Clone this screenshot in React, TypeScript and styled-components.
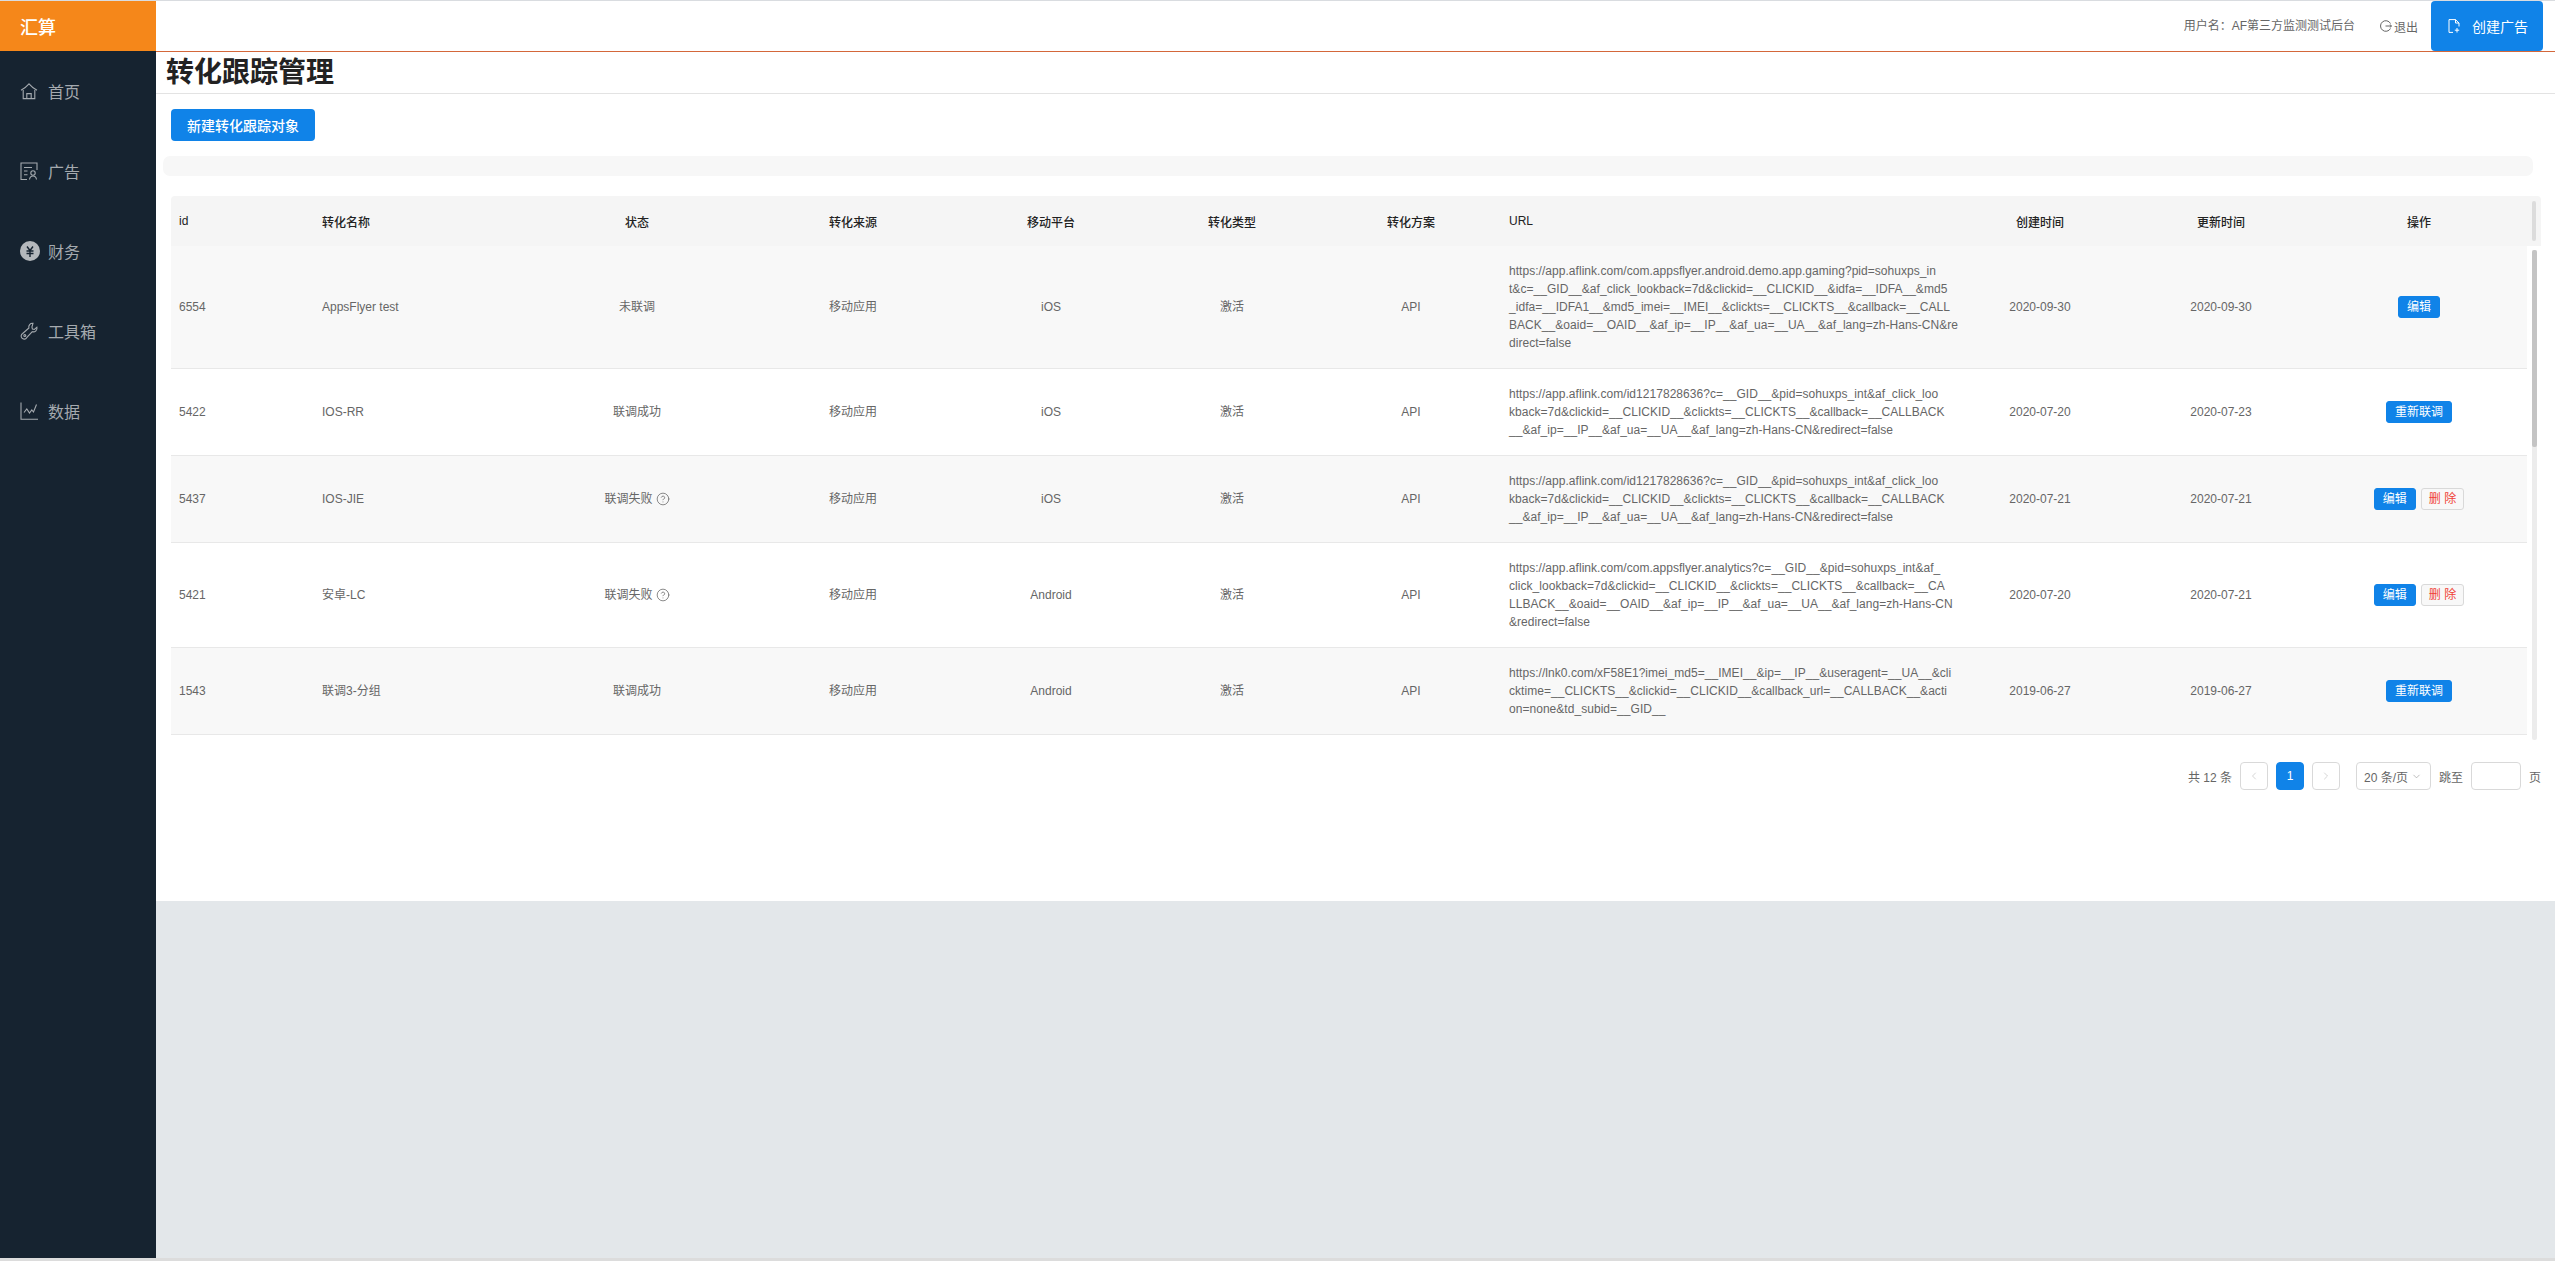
import React from 'react';
import styled, { createGlobalStyle } from 'styled-components';
import { CircleHelp, ChevronLeft, ChevronRight, ChevronDown } from 'lucide-react';

const GlobalStyle = createGlobalStyle`
  html, body {
    margin: 0;
    padding: 0;
    background: #e3e7ea;
    font-family: "Liberation Sans", "Noto Sans CJK SC", sans-serif;
    font-size: 12px;
    color: #666;
  }
  * { box-sizing: border-box; }
`;

const Shell = styled.div`
  display: flex;
  height: 1261px;
  border-top: 1px solid #d9dce0;
  border-bottom: 3px solid #dcdcdc;
  overflow: hidden;
`;

const Sidebar = styled.aside`
  width: 156px;
  flex: none;
  background: #162330;
`;

const Logo = styled.div`
  height: 50px;
  padding-left: 20px;
  display: flex;
  align-items: center;
  background: #f5871a;
  color: #fff;
  font-size: 18px;
  font-weight: 500;
`;

const NavItem = styled.div`
  height: 80px;
  padding-left: 20px;
  display: flex;
  align-items: center;
  gap: 10px;
  color: #a5aaaf;
  font-size: 16px;
`;

const NavIcon = styled.svg`
  width: 18px;
  height: 18px;
  flex: none;
  fill: none;
  stroke: #a5aaaf;
  stroke-width: 1.1;
  overflow: visible;
`;

const Main = styled.main`
  flex: 1;
  min-width: 0;
  display: flex;
  flex-direction: column;
`;

const TopBar = styled.header`
  height: 51px;
  flex: none;
  padding-right: 12px;
  display: flex;
  align-items: flex-start;
  justify-content: flex-end;
  background: #fff;
  border-bottom: 1px solid #d4673a;
`;

const UserName = styled.span`
  height: 50px;
  line-height: 50px;
  color: #666;
`;

const Logout = styled.span`
  height: 50px;
  margin: 0 13px 0 25px;
  display: flex;
  align-items: center;
  gap: 2px;
  color: #666;
`;

const SmallIcon = styled.svg<{ $light?: boolean }>`
  width: 12px;
  height: ${p => (p.$light ? 14 : 12)}px;
  fill: none;
  stroke: ${p => (p.$light ? '#fff' : '#666')};
  stroke-width: 1;
`;

const CreateAd = styled.button`
  width: 112px;
  height: 50px;
  padding: 0 0 0 17px;
  display: flex;
  align-items: center;
  gap: 12px;
  border: 0;
  border-radius: 4px;
  background: #1083e8;
  color: #fff;
  font: inherit;
  font-size: 14px;
`;

const Panel = styled.section`
  height: 849px;
  flex: none;
  background: #fff;
`;

const TitleBar = styled.div`
  height: 42px;
  padding-left: 10px;
  border-bottom: 1px solid #e3e3e3;
`;

const PageTitle = styled.h1`
  margin: 0;
  line-height: 41px;
  font-size: 28px;
  font-weight: 700;
  color: #222;
`;

const Toolbar = styled.div`
  padding: 15px 0 0 15px;
`;

const PrimaryButton = styled.button`
  width: 144px;
  height: 32px;
  padding: 0;
  border: 0;
  border-radius: 4px;
  background: #1083e8;
  color: #fff;
  font: inherit;
  font-size: 14px;
  font-weight: 500;
`;

const FilterBar = styled.div`
  height: 20px;
  margin: 15px 22px 0 7px;
  border-radius: 7px;
  background: #f7f7f7;
`;

const TableArea = styled.div`
  width: 2370px;
  margin: 20px 0 0 15px;
`;

const HeadRow = styled.div`
  display: flex;
  height: 50px;
  border-radius: 4px 4px 0 0;
  background: #f5f5f5;
`;

const HeadGutter = styled.div`
  width: 14px;
  padding: 5px;
`;

const HeadThumb = styled.div`
  width: 4px;
  height: 40px;
  border-radius: 2px;
  background: #dcdcdc;
`;

const Grid = styled.table`
  width: 2356px;
  flex: none;
  align-self: flex-start;
  table-layout: fixed;
  border-collapse: collapse;
`;

const Col = styled.col<{ $w: number }>`
  width: ${p => p.$w}px;
`;

const Th = styled.th<{ $left?: boolean }>`
  height: 50px;
  padding: 0 8px;
  text-align: ${p => (p.$left ? 'left' : 'center')};
  font-size: 12px;
  font-weight: 500;
  color: #222;
`;

const BodyRow = styled.div`
  display: flex;
  height: 494px;
  overflow: hidden;
`;

const Tr = styled.tr<{ $odd: boolean }>`
  background: ${p => (p.$odd ? '#f8f8f8' : '#fff')};
  border-bottom: 1px solid #e8e8e8;
`;

const Td = styled.td<{ $left?: boolean }>`
  padding: 16px 8px;
  text-align: ${p => (p.$left ? 'left' : 'center')};
  line-height: 18px;
  color: #666;
`;

const UrlLine = styled.div`
  letter-spacing: 0.04px;
  white-space: nowrap;
`;

const Track = styled.div`
  width: 5px;
  margin: 4px 0 0 5px;
  border-radius: 2px;
  background: #ececec;
`;

const Thumb = styled.div`
  height: 197px;
  border-radius: 2px;
  background: #c4c4c4;
`;

const StatusLine = styled.span`
  display: inline-flex;
  align-items: center;
  gap: 3px;
  vertical-align: middle;
`;

const Actions = styled.div`
  display: flex;
  justify-content: center;
  gap: 5px;
`;

const MiniButton = styled.button<{ $danger?: boolean }>`
  height: 22px;
  padding: 0 ${p => (p.$danger ? 7 : 8)}px;
  border: 1px solid ${p => (p.$danger ? '#d9d9d9' : '#1083e8')};
  border-radius: 3px;
  background: ${p => (p.$danger ? '#f8f8f8' : '#1083e8')};
  color: ${p => (p.$danger ? '#f04134' : '#fff')};
  font: inherit;
  font-size: 12px;
  line-height: 20px;
`;

const Pager = styled.nav`
  height: 28px;
  margin-top: 22px;
  display: flex;
  align-items: center;
  justify-content: flex-end;
  color: #666;
`;

const PageBox = styled.span<{ $active?: boolean }>`
  width: 28px;
  height: 28px;
  margin-left: 8px;
  display: flex;
  align-items: center;
  justify-content: center;
  border: 1px solid ${p => (p.$active ? '#1083e8' : '#d9d9d9')};
  border-radius: 4px;
  background: ${p => (p.$active ? '#1083e8' : '#fff')};
  color: ${p => (p.$active ? '#fff' : '#b8b8b8')};
`;

const PageSize = styled.span`
  width: 75px;
  height: 28px;
  margin: 0 8px 0 16px;
  padding-left: 7px;
  display: flex;
  align-items: center;
  gap: 3px;
  border: 1px solid #d9d9d9;
  border-radius: 4px;
`;

const JumpInput = styled.span`
  width: 50px;
  height: 28px;
  margin: 0 8px;
  border: 1px solid #d9d9d9;
  border-radius: 4px;
`;

const columns = [
  { title: 'id', width: 143, left: true },
  { title: '转化名称', width: 213, left: true },
  { title: '状态', width: 220 },
  { title: '转化来源', width: 212 },
  { title: '移动平台', width: 184 },
  { title: '转化类型', width: 178 },
  { title: '转化方案', width: 180 },
  { title: 'URL', width: 448, left: true },
  { title: '创建时间', width: 182 },
  { title: '更新时间', width: 180 },
  { title: '操作', width: 216 },
];

// the url column wraps mid-word, so the lines are kept as they break in the design
const shortLinkLines = [
  'https://app.aflink.com/id1217828636?c=__GID__&pid=sohuxps_int&af_click_loo',
  'kback=7d&clickid=__CLICKID__&clickts=__CLICKTS__&callback=__CALLBACK',
  '__&af_ip=__IP__&af_ua=__UA__&af_lang=zh-Hans-CN&redirect=false',
];

const rows = [
  {
    id: '6554',
    name: 'AppsFlyer test',
    status: '未联调',
    platform: 'iOS',
    url: [
      'https://app.aflink.com/com.appsflyer.android.demo.app.gaming?pid=sohuxps_in',
      't&c=__GID__&af_click_lookback=7d&clickid=__CLICKID__&idfa=__IDFA__&md5',
      '_idfa=__IDFA1__&md5_imei=__IMEI__&clickts=__CLICKTS__&callback=__CALL',
      'BACK__&oaid=__OAID__&af_ip=__IP__&af_ua=__UA__&af_lang=zh-Hans-CN&re',
      'direct=false',
    ],
    created: '2020-09-30',
    updated: '2020-09-30',
    actions: ['edit'],
  },
  {
    id: '5422',
    name: 'IOS-RR',
    status: '联调成功',
    platform: 'iOS',
    url: shortLinkLines,
    created: '2020-07-20',
    updated: '2020-07-23',
    actions: ['relink'],
  },
  {
    id: '5437',
    name: 'IOS-JIE',
    status: '联调失败',
    help: true,
    platform: 'iOS',
    url: shortLinkLines,
    created: '2020-07-21',
    updated: '2020-07-21',
    actions: ['edit', 'delete'],
  },
  {
    id: '5421',
    name: '安卓-LC',
    status: '联调失败',
    help: true,
    platform: 'Android',
    url: [
      'https://app.aflink.com/com.appsflyer.analytics?c=__GID__&pid=sohuxps_int&af_',
      'click_lookback=7d&clickid=__CLICKID__&clickts=__CLICKTS__&callback=__CA',
      'LLBACK__&oaid=__OAID__&af_ip=__IP__&af_ua=__UA__&af_lang=zh-Hans-CN',
      '&redirect=false',
    ],
    created: '2020-07-20',
    updated: '2020-07-21',
    actions: ['edit', 'delete'],
  },
  {
    id: '1543',
    name: '联调3-分组',
    status: '联调成功',
    platform: 'Android',
    url: [
      'https://lnk0.com/xF58E1?imei_md5=__IMEI__&ip=__IP__&useragent=__UA__&cli',
      'cktime=__CLICKTS__&clickid=__CLICKID__&callback_url=__CALLBACK__&acti',
      'on=none&td_subid=__GID__',
    ],
    created: '2019-06-27',
    updated: '2019-06-27',
    actions: ['relink'],
  },
];

const navItems = [
  {
    label: '首页',
    icon: (
      <NavIcon viewBox="0 0 18 18">
        <path d="M1 8.2C4 6.5 6.8 4.4 9 1.8c2.200 2.600 5 4.700 8 6.400" />
        <path d="M3.200 8v8.600h11.600V8" />
        <path d="M6.800 16.600v-5h4.400v5" />
      </NavIcon>
    ),
  },
  {
    label: '广告',
    icon: (
      <NavIcon viewBox="0 0 18 18">
        <path d="M17 8V1H1v16.500h6" />
        <path d="M4 5.500h8M4 9h3.500M4 12.800h3.500" />
        <circle cx="13" cy="11" r="2.200" />
        <path d="M9.500 17.500c.3-2.200 1.700-3.500 3.500-3.500s3.200 1.300 3.500 3.500" />
      </NavIcon>
    ),
  },
  {
    label: '财务',
    icon: (
      <NavIcon viewBox="0 0 18 18">
        <circle cx="10" cy="9" r="10" fill="#b4b8bc" stroke="none" />
        <path d="M7 4.500 10 8.500l3-4M6.500 9h7M6.500 11.500h7M10 8.500V15" stroke="#162330" strokeWidth="1.400" />
      </NavIcon>
    ),
  },
  {
    label: '工具箱',
    icon: (
      <NavIcon viewBox="0 0 18 18">
        <path d="M13 1.300a3.700 3.700 0 0 0-4.100 4.700L2.700 11.500a3 3 0 1 0 4 4.200l5.600-6a3.700 3.700 0 0 0 4.600-4.500l-2.500 2.300-2-.5-.5-2z" />
        <circle cx="4.800" cy="13.500" r="1" />
      </NavIcon>
    ),
  },
  {
    label: '数据',
    icon: (
      <NavIcon viewBox="0 0 18 18">
        <path d="M1 .5v16.800h17" />
        <path d="M4 10.500 6.800 7l2.700 4 2.300-3 1.700 2 3-7.500" />
      </NavIcon>
    ),
  },
];

const App: React.FC = () => {
  return (
    <>
      <GlobalStyle />
      <Shell>
        <Sidebar>
          <Logo>汇算</Logo>
          {navItems.map(item => (
            <NavItem key={item.label}>
              {item.icon}
              {item.label}
            </NavItem>
          ))}
        </Sidebar>
        <Main>
          <TopBar>
            <UserName>用户名：AF第三方监测测试后台</UserName>
            <Logout>
              <SmallIcon viewBox="0 0 12 12">
                <path d="M10.500 3.500a5.300 5.300 0 1 0 0 5" />
                <path d="M5.500 6h6M9.800 4.500 11.500 6 9.800 7.500" />
              </SmallIcon>
              退出
            </Logout>
            <CreateAd>
              <SmallIcon $light viewBox="0 0 12 14">
                <path d="M5 13.400H1V.6h6.500L11 4v3.500" />
                <path d="M7.500.6V4H11M9 9v4.500M6.800 11.200h4.400" />
              </SmallIcon>
              创建广告
            </CreateAd>
          </TopBar>
          <Panel>
            <TitleBar>
              <PageTitle>转化跟踪管理</PageTitle>
            </TitleBar>
            <Toolbar>
              <PrimaryButton>新建转化跟踪对象</PrimaryButton>
            </Toolbar>
            <FilterBar />
            <TableArea>
              <HeadRow>
                <Grid>
                  <colgroup>
                    {columns.map(col => (
                      <Col key={col.title} $w={col.width} />
                    ))}
                  </colgroup>
                  <thead>
                    <tr>
                      {columns.map(col => (
                        <Th key={col.title} $left={col.left}>
                          {col.title}
                        </Th>
                      ))}
                    </tr>
                  </thead>
                </Grid>
                <HeadGutter>
                  <HeadThumb />
                </HeadGutter>
              </HeadRow>
              <BodyRow>
                <Grid>
                  <colgroup>
                    {columns.map(col => (
                      <Col key={col.title} $w={col.width} />
                    ))}
                  </colgroup>
                  <tbody>
                    {rows.map((row, i) => (
                      <Tr key={row.id} $odd={i % 2 === 0}>
                        <Td $left>{row.id}</Td>
                        <Td $left>{row.name}</Td>
                        <Td>
                          <StatusLine>
                            {row.status}
                            {row.help && <CircleHelp size={14} strokeWidth={1.3} color="#666" />}
                          </StatusLine>
                        </Td>
                        <Td>移动应用</Td>
                        <Td>{row.platform}</Td>
                        <Td>激活</Td>
                        <Td>API</Td>
                        <Td $left>
                          {row.url.map(line => (
                            <UrlLine key={line}>{line}</UrlLine>
                          ))}
                        </Td>
                        <Td>{row.created}</Td>
                        <Td>{row.updated}</Td>
                        <Td>
                          <Actions>
                            {row.actions.includes('edit') && <MiniButton>编辑</MiniButton>}
                            {row.actions.includes('relink') && <MiniButton>重新联调</MiniButton>}
                            {row.actions.includes('delete') && <MiniButton $danger>删 除</MiniButton>}
                          </Actions>
                        </Td>
                      </Tr>
                    ))}
                  </tbody>
                </Grid>
                <Track>
                  <Thumb />
                </Track>
              </BodyRow>
              <Pager>
                共 12 条
                <PageBox>
                  <ChevronLeft size={12} strokeWidth={1.2} />
                </PageBox>
                <PageBox $active>1</PageBox>
                <PageBox>
                  <ChevronRight size={12} strokeWidth={1.2} />
                </PageBox>
                <PageSize>
                  20 条/页
                  <ChevronDown size={11} strokeWidth={1.2} color="#888" />
                </PageSize>
                跳至
                <JumpInput />页
              </Pager>
            </TableArea>
          </Panel>
        </Main>
      </Shell>
    </>
  );
};

export default App;
